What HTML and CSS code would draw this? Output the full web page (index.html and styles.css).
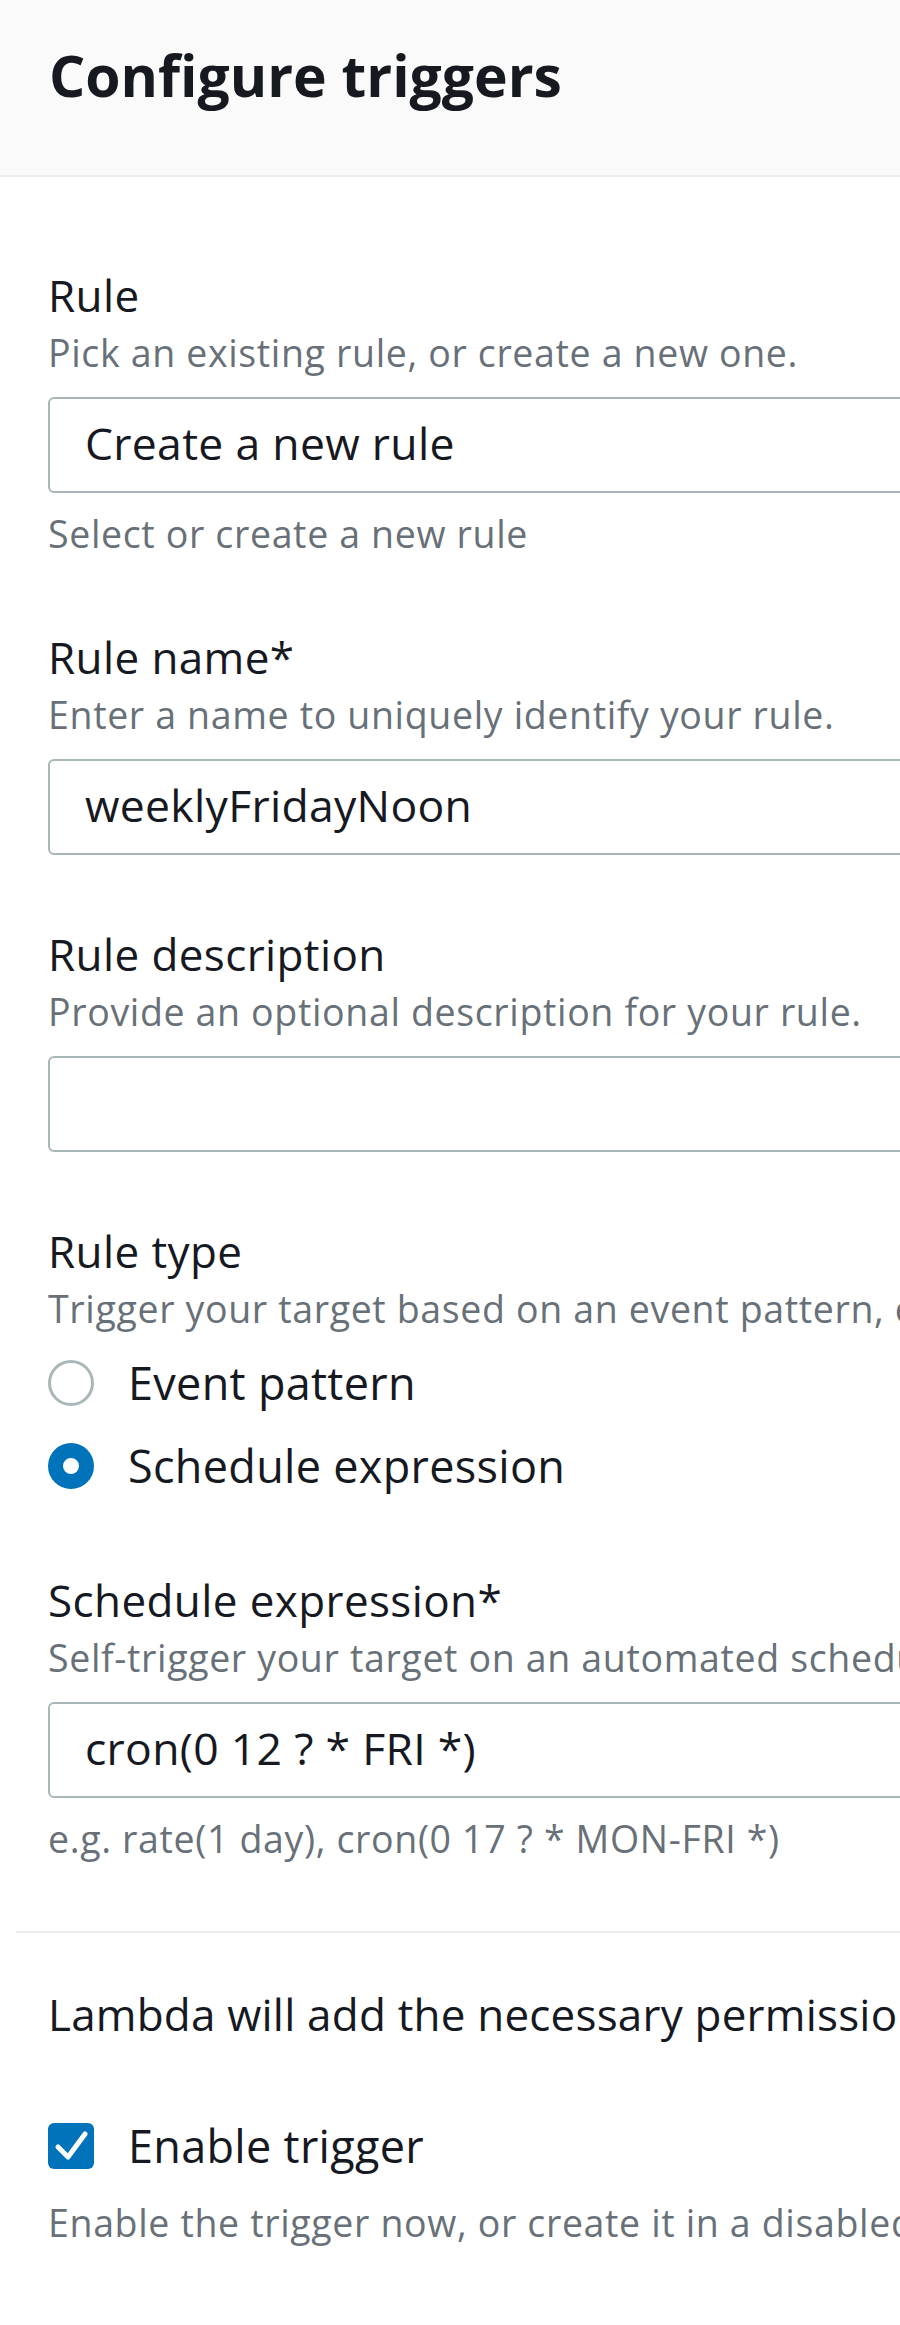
FILE: index.html
```html
<!DOCTYPE html>
<html lang="en">
<head>
  <meta charset="UTF-8" />
  <meta name="viewport" content="width=device-width, initial-scale=1.0" />
  <title>Configure triggers</title>
  <link rel="stylesheet" href="styles.css">
</head>
<body>
  <div class="panel">
    <header class="panel-header">
      <h2>Configure triggers</h2>
    </header>

    <div class="panel-body">
      <!-- Rule -->
      <div class="field">
        <label class="field-label" for="rule">Rule</label>
        <div class="field-desc">Pick an existing rule, or create a new one.</div>
        <input class="text-input" type="text" id="rule" value="Create a new rule" />
        <div class="field-hint">Select or create a new rule</div>
      </div>

      <!-- Rule name -->
      <div class="field">
        <label class="field-label" for="ruleName">Rule name*</label>
        <div class="field-desc">Enter a name to uniquely identify your rule.</div>
        <input class="text-input" type="text" id="ruleName" value="weeklyFridayNoon" />
      </div>

      <!-- Rule description -->
      <div class="field">
        <label class="field-label" for="ruleDesc">Rule description</label>
        <div class="field-desc">Provide an optional description for your rule.</div>
        <input class="text-input" type="text" id="ruleDesc" value="" />
      </div>

      <!-- Rule type -->
      <div class="field">
        <div class="field-label">Rule type</div>
        <div class="field-desc">Trigger your target based on an event pattern, or based on an automated schedule.</div>
        <div class="radio-group">
          <div class="radio-row">
            <span class="radio"></span>
            <span>Event pattern</span>
          </div>
          <div class="radio-row">
            <span class="radio checked"></span>
            <span>Schedule expression</span>
          </div>
        </div>
      </div>

      <!-- Schedule expression -->
      <div class="field">
        <label class="field-label" for="schedule">Schedule expression*</label>
        <div class="field-desc">Self-trigger your target on an automated schedule using Cron or rate expressions.</div>
        <input class="text-input" type="text" id="schedule" value="cron(0 12 ? * FRI *)" />
        <div class="field-hint">e.g. rate(1 day), cron(0 17 ? * MON-FRI *)</div>
      </div>

      <div class="divider"></div>

      <div class="footer-fields">
        <p class="note">Lambda will add the necessary permissions for Amazon CloudWatch Events to invoke your Lambda function from this trigger.</p>
        <div class="check-row">
          <span class="checkbox">
            <svg viewBox="0 0 46 46" width="46" height="46">
              <path d="M10 24 L20 34 L37 11" fill="none" stroke="#fff" stroke-width="5" stroke-linecap="round" stroke-linejoin="round"/>
            </svg>
          </span>
          <span>Enable trigger</span>
        </div>
        <div class="field-desc check-desc">Enable the trigger now, or create it in a disabled state for testing (recommended).</div>
      </div>
    </div>
  </div>
</body>
</html>
```

FILE: styles.css
```css
* {
  box-sizing: border-box;
}

body {
  font-family: "Open Sans", Arial, sans-serif;
  margin: 0;
  padding: 0;
  background: #fff;
  color: #16191f;
}

.panel {
  width: 100%;
  overflow: hidden;
}

.panel-header {
  background-color: #fafafa;
  border-bottom: 2px solid #eaeded;
  padding: 41px 0 66px 49px;
}

.panel-header h2 {
  margin: 0;
  font-size: 57px;
  line-height: 68px;
  font-weight: 700;
  white-space: nowrap;
}

.panel-body {
  padding: 90px 0 0 16px;
}

.field,
.footer-fields {
  padding-left: 32px;
  margin-bottom: 71px;
}

.field-label {
  display: block;
  font-size: 44px;
  line-height: 56px;
  letter-spacing: 0.4px;
  white-space: nowrap;
}

.field-desc,
.field-hint {
  font-size: 37.5px;
  line-height: 48px;
  letter-spacing: 0.65px;
  color: #687078;
  white-space: nowrap;
}

.field-desc {
  margin-top: 6px;
}

.field-hint {
  margin-top: 17px;
}

.text-input {
  display: block;
  width: 1100px;
  height: 96px;
  margin-top: 20px;
  padding: 0 35px 5px;
  border: 2px solid #aab7b8;
  border-radius: 6px;
  font-family: inherit;
  font-size: 44.5px;
  letter-spacing: 0.3px;
  color: #16191f;
  background: #fff;
  outline: none;
}

.radio-group {
  margin-top: 20px;
  padding-bottom: 5px;
  display: flex;
  flex-direction: column;
  gap: 23px;
}

.radio-row,
.check-row {
  display: flex;
  align-items: center;
  font-size: 45px;
  line-height: 60px;
  letter-spacing: 0.3px;
  white-space: nowrap;
}

.radio {
  width: 46px;
  height: 46px;
  margin-right: 34px;
  border: 3px solid #aab7b8;
  border-radius: 50%;
  background: #fff;
  flex-shrink: 0;
}

.radio.checked {
  border: 15px solid #0073bb;
}

.divider {
  border-top: 2px solid #eaeded;
  margin-top: -3px;
  margin-bottom: 51px;
  width: 1000px;
}

.field:nth-last-of-type(1) {
  margin-bottom: 68px;
}

.note {
  margin: 0;
  font-size: 44px;
  line-height: 60px;
  letter-spacing: 0.2px;
  white-space: nowrap;
}

.check-row {
  margin-top: 72px;
}

.checkbox {
  width: 46px;
  height: 46px;
  margin-right: 34px;
  border-radius: 6px;
  background: #0073bb;
  flex-shrink: 0;
}

.checkbox svg {
  display: block;
}

.check-desc {
  margin-top: 23px;
}
```
